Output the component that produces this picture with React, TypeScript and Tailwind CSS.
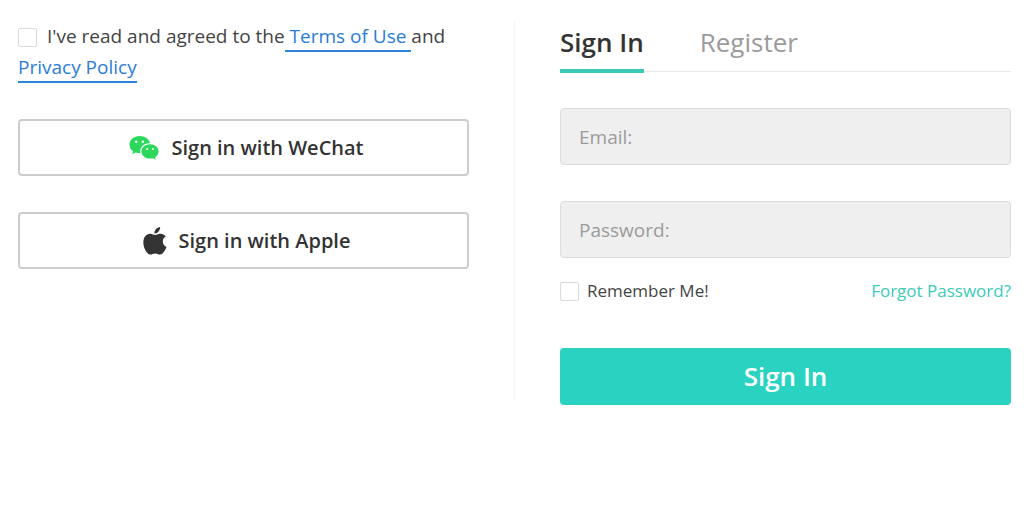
import { useState } from 'react';

const TABS = ['Sign In', 'Register'] as const;

function WeChatIcon() {
  return (
    <svg viewBox="0 0 30 24" className="h-6 w-[30px]" aria-hidden="true">
      <path
        fill="#2bd85c"
        d="M10.6 0C4.8 0 .5 3.9.5 8.7c0 2.7 1.4 5 3.6 6.6l-.9 3 3.5-1.8c1.2.4 2.5.6 3.9.6h.9a7 7 0 0 1-.3-2c0-4.4 4.2-7.8 9.1-7.8h.8C20.3 3.1 15.9 0 10.6 0Z"
      />
      <path
        fill="#2bd85c"
        d="M29.6 15.4c0-4-4-7.1-8.6-7.1s-8.6 3.2-8.6 7.1c0 4 3.9 7.2 8.6 7.2 1 0 2-.2 3-.4l2.7 1.5-.7-2.5c2.1-1.4 3.6-3.5 3.6-5.8Z"
      />
      <g fill="#fff">
        <circle cx="7.3" cy="5.8" r="1.2" />
        <circle cx="13.8" cy="5.8" r="1.2" />
        <circle cx="18.2" cy="13.1" r="1" />
        <circle cx="23.9" cy="13.1" r="1" />
      </g>
    </svg>
  );
}

function AppleIcon() {
  return (
    <svg viewBox="0 0 24 28" className="h-7 w-6" aria-hidden="true">
      <path
        fill="#333"
        d="M17.1 0c.2 1.7-.5 3.3-1.5 4.5-1 1.2-2.6 2.1-4.2 2-.2-1.6.6-3.3 1.5-4.3C14 1 15.7.1 17.1 0ZM22.7 9.6c-1.9 1.2-2.9 2.8-2.9 4.9 0 2.4 1.4 4.5 3.7 5.4-.5 1.5-1.2 2.8-2 4-1.2 1.8-2.5 3.6-4.5 3.6-1.9.1-2.6-1.1-4.8-1.1-2.3 0-3 1.1-4.8 1.2-1.9.1-3.4-1.9-4.6-3.7C.3 20.2-.6 13.9 1.5 10.2c1.3-2.2 3.4-3.5 5.7-3.5 2 0 3.7 1.3 4.9 1.3 1.2 0 3.2-1.5 5.7-1.3 1.5.1 3.6.7 4.9 2.9Z"
      />
    </svg>
  );
}

const checkboxClass =
  'size-[19px] shrink-0 appearance-none rounded-xs border border-[#d9d9d9] bg-white checked:border-[#2ad2c1] checked:bg-[#2ad2c1]';
const policyLinkClass = 'border-b-2 border-[#2b83dc] pb-px text-[#2b7bd9]';
const providerClass =
  'flex h-[57px] w-full items-center justify-center gap-3 rounded border-2 border-[#cdcdcd] bg-white pl-1.5 text-xl font-semibold text-[#333]';
const fieldClass =
  'block h-[57px] w-full rounded border border-[#dcdcdc] bg-[#efefef] px-[18px] text-[19px] text-[#333] placeholder:text-[#9b9b9b]';

export default function App() {
  const [tab, setTab] = useState<(typeof TABS)[number]>('Sign In');

  return (
    <main className="grid grid-cols-[1fr_1px_1fr] gap-x-[45px] bg-white pt-[21px] pr-[13px] pl-[18px] font-['Open_Sans',sans-serif] text-[#444]">
      <section>
        <div className="text-[19px] leading-[31px]">
          <input id="agree" type="checkbox" className={`${checkboxClass} mr-2.5 align-[-4px]`} />
          <label htmlFor="agree">I've read and agreed to the</label>
          <a href="#terms" className={`${policyLinkClass} whitespace-pre-wrap`}>
            {' Terms of Use '}
          </a>
          and{' '}
          <a href="#privacy" className={policyLinkClass}>
            Privacy Policy
          </a>
        </div>

        <div className="mt-9 flex flex-col gap-9">
          <button type="button" className={providerClass}>
            <WeChatIcon />
            Sign in with WeChat
          </button>
          <button type="button" className={providerClass}>
            <AppleIcon />
            Sign in with Apple
          </button>
        </div>
      </section>

      <div className="h-[380px] bg-[#f5f5f5]" />

      <section>
        <div className="flex h-[51px] gap-14 border-b border-[#e8e8e8] text-[26px] leading-[42px]">
          {TABS.map((name) => (
            <button
              key={name}
              type="button"
              onClick={() => setTab(name)}
              className={
                tab === name
                  ? 'h-[52px] border-b-4 border-[#3cc8b4] pb-1.5 font-semibold text-[#333]'
                  : 'h-[52px] pb-2.5 text-[#9b9b9b]'
              }
            >
              {name}
            </button>
          ))}
        </div>

        <form className="mt-9" onSubmit={(e) => e.preventDefault()}>
          <div className="flex flex-col gap-9">
            <input type="email" aria-label="Email" placeholder="Email:" className={fieldClass} />
            <input type="password" aria-label="Password" placeholder="Password:" className={fieldClass} />
          </div>

          <div className="mt-[21px] flex items-center justify-between text-[17px] leading-6">
            <label className="flex items-center gap-2">
              <input type="checkbox" className={checkboxClass} />
              Remember Me!
            </label>
            <a href="#forgot" className="text-[#3ccbb8]">
              Forgot Password?
            </a>
          </div>

          <button
            type="submit"
            className="mt-[45px] h-[57px] w-full rounded bg-[#2ad2c1] text-[26px] font-semibold text-white"
          >
            Sign In
          </button>
        </form>
      </section>
    </main>
  );
}
